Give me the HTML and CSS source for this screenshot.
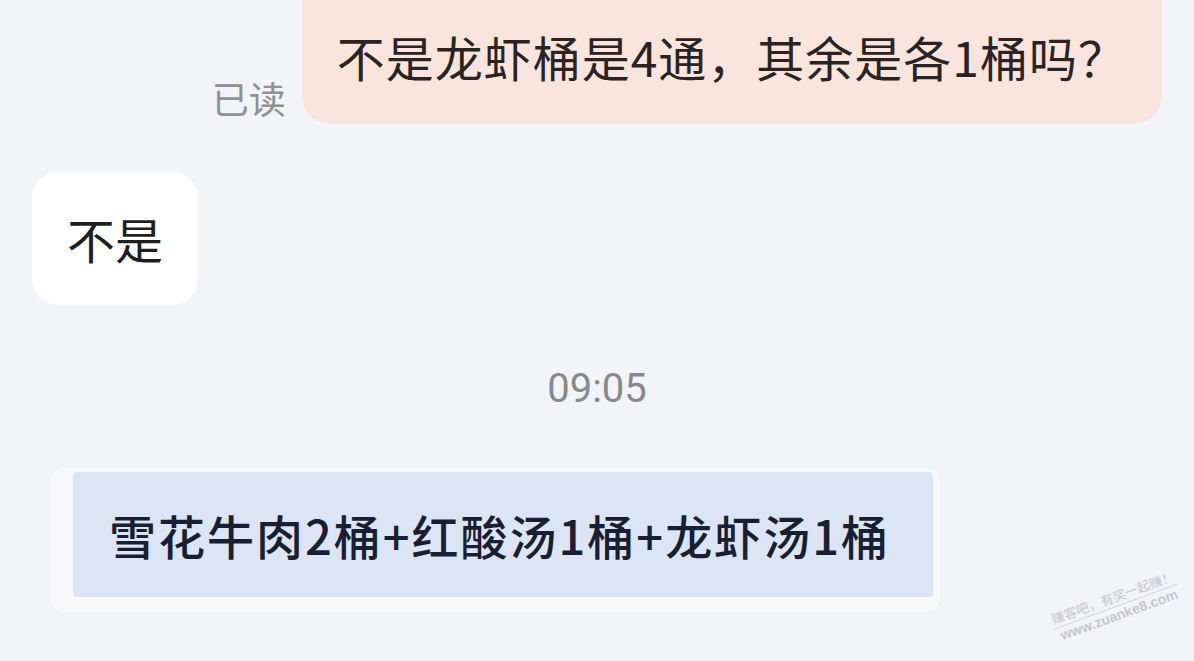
FILE: index.html
```html
<!DOCTYPE html>
<html lang="zh-CN">
<head>
    <meta charset="UTF-8">
    <meta name="viewport" content="width=device-width, initial-scale=1.0">
    <title>聊天</title>
    <link rel="stylesheet" href="styles.css">
</head>
<body>
    <div class="chatList">
        <div class="msgRow outgoing">
            <span class="readMark">已读</span>
            <div class="bubble mine">不是龙虾桶是4通，其余是各1桶吗？</div>
        </div>

        <div class="msgRow incoming">
            <div class="bubble theirs">不是</div>
        </div>

        <div class="timeStamp">09:05</div>

        <div class="msgRow incoming">
            <div class="picFrame">
                <div class="picInner">雪花牛肉2桶+红酸汤1桶+龙虾汤1桶</div>
            </div>
        </div>
    </div>

    <div class="watermark">
        <div class="wmTitle">赚客吧，有奖一起赚！</div>
        <div class="wmUrl">www.zuanke8.com</div>
    </div>
</body>
</html>
```

FILE: styles.css
```css
html, body {
    margin: 0;
    height: 100%;
}

body {
    font-family: "Noto Sans CJK SC", "Noto Sans", sans-serif;
    background-color: #f3f4f8;
    color: #222;
    position: relative;
    overflow: hidden;
}

.chatList {
    display: flex;
    flex-direction: column;
    padding: 0 32px 0 32px;
}

.msgRow {
    display: flex;
    align-items: flex-end;
}

.outgoing {
    justify-content: flex-end;
    gap: 16px;
    margin-top: -28px;
}

.incoming {
    justify-content: flex-start;
}

.readMark {
    font-size: 37px;
    line-height: 40px;
    color: #909096;
    padding-bottom: 5px;
}

.bubble {
    line-height: 66px;
    border-radius: 26px;
}

.mine {
    background-color: #fae5de;
    color: #2b2222;
    font-size: 48px;
    letter-spacing: 1px;
    padding: 51px 35px 34px 35px;
}

.theirs {
    background-color: #ffffff;
    color: #1e1e1e;
    font-size: 48px;
    margin-top: 49px;
    padding: 33px 35px 34px 35px;
}

.timeStamp {
    font-family: Roboto, "Noto Sans", sans-serif;
    font-size: 40px;
    line-height: 48px;
    color: #88888d;
    text-align: center;
    margin-top: 60px;
}

.picFrame {
    margin-top: 55px;
    margin-left: 18px;
    width: 890px;
    padding: 4px 7px 15px 23px;
    box-sizing: border-box;
    background-color: #f9f9fb;
    border-radius: 14px;
    box-shadow: 0 0 3px rgba(0, 0, 0, 0.04);
}

.picInner {
    height: 125px;
    display: flex;
    align-items: center;
    padding-left: 36px;
    background-color: #dbe5f6;
    border-radius: 4px;
    color: #1a1e33;
    font-size: 47px;
    font-weight: 500;
    letter-spacing: 2px;
}

.watermark {
    position: absolute;
    right: 13px;
    bottom: 38px;
    transform: rotate(-20deg);
    color: #c6c7cc;
    font-size: 13px;
    line-height: 16px;
    text-align: center;
}

.wmTitle {
    border-bottom: 1px solid #d4d5da;
    padding-bottom: 1px;
}

.wmUrl {
    font-family: "Liberation Sans", sans-serif;
    font-weight: bold;
    font-size: 14px;
}
```
